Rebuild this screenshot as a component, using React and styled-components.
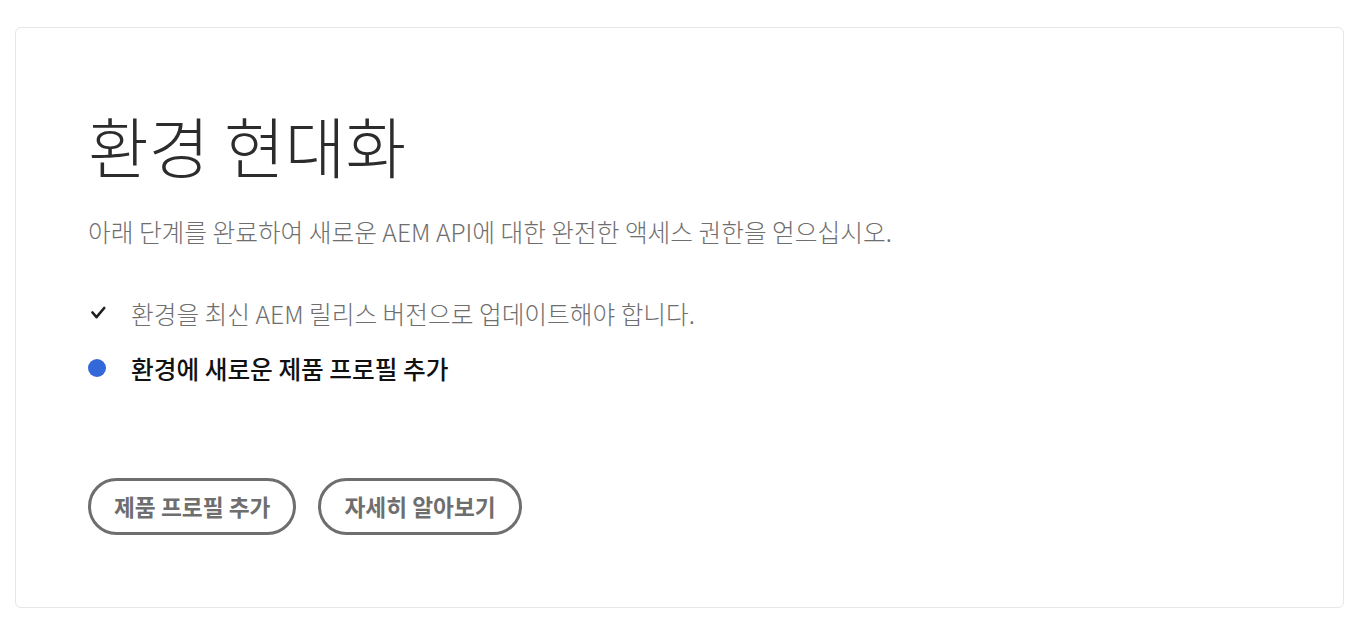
import styled, { createGlobalStyle } from "styled-components";

const GlobalStyle = createGlobalStyle`
  html, body {
    margin: 0;
    padding: 0;
    background: #ffffff;
  }
  body {
    font-family: "Noto Sans CJK KR", "Noto Sans", sans-serif;
  }
`;

const steps = [
  { text: "환경을 최신 AEM 릴리스 버전으로 업데이트해야 합니다.", done: true },
  { text: "환경에 새로운 제품 프로필 추가", done: false },
];

const App = () => {
  return (
    <>
      <GlobalStyle />
      <Page>
        <Card>
          <Title>환경 현대화</Title>
          <Description>
            아래 단계를 완료하여 새로운 AEM API에 대한 완전한 액세스 권한을 얻으십시오.
          </Description>
          <StepList>
            {steps.map((step) => (
              <Step key={step.text}>
                <Marker>
                  {step.done ? (
                    <svg width="18" height="18" viewBox="0 0 18 18">
                      <path
                        d="M4.5 8.5L8.5 13.2L16.2 4"
                        fill="none"
                        stroke="#1f1f1f"
                        strokeWidth="2.6"
                        strokeLinecap="round"
                        strokeLinejoin="round"
                      />
                    </svg>
                  ) : (
                    <Dot />
                  )}
                </Marker>
                <StepText $active={!step.done}>{step.text}</StepText>
              </Step>
            ))}
          </StepList>
          <Actions>
            <OutlineButton>제품 프로필 추가</OutlineButton>
            <OutlineButton>자세히 알아보기</OutlineButton>
          </Actions>
        </Card>
      </Page>
    </>
  );
};

const Page = styled.div`
  padding: 27px 10px 16px 15px;
  box-sizing: border-box;
  height: 624px;
`;

const Card = styled.section`
  box-sizing: border-box;
  height: 581px;
  border: 1px solid #e6e6e6;
  border-radius: 6px;
  padding: 76px 72px 0;
`;

const Title = styled.h1`
  margin: 0;
  font-size: 66px;
  font-weight: 300;
  line-height: 80px;
  color: #2c2c2c;
`;

const Description = styled.p`
  margin: 30px 0 0;
  font-size: 24.7px;
  font-weight: 300;
  line-height: 34px;
  color: #6e6e6e;
`;

const StepList = styled.ul`
  list-style: none;
  margin: 48px 0 0;
  padding: 0;
  display: flex;
  flex-direction: column;
  gap: 21px;
`;

const Step = styled.li`
  display: flex;
  align-items: center;
  gap: 25px;
  height: 34px;
`;

const Marker = styled.span`
  width: 18px;
  height: 18px;
  display: flex;
  align-items: center;
  justify-content: center;
`;

const Dot = styled.span`
  width: 18px;
  height: 18px;
  border-radius: 50%;
  background: #3268d8;
`;

const StepText = styled.span`
  font-size: 24.7px;
  line-height: 34px;
  font-weight: ${(p) => (p.$active ? 500 : 300)};
  color: ${(p) => (p.$active ? "#111111" : "#6e6e6e")};
`;

const Actions = styled.div`
  display: flex;
  gap: 22px;
  margin-top: 93px;
`;

const OutlineButton = styled.button`
  box-sizing: border-box;
  height: 57px;
  padding: 0 23px;
  border: 3px solid #6e6e6e;
  border-radius: 29px;
  background: transparent;
  font-family: "Noto Sans CJK KR", "Noto Sans", sans-serif;
  font-size: 22.7px;
  font-weight: 700;
  color: #6e6e6e;
  cursor: pointer;
`;

export default App;
